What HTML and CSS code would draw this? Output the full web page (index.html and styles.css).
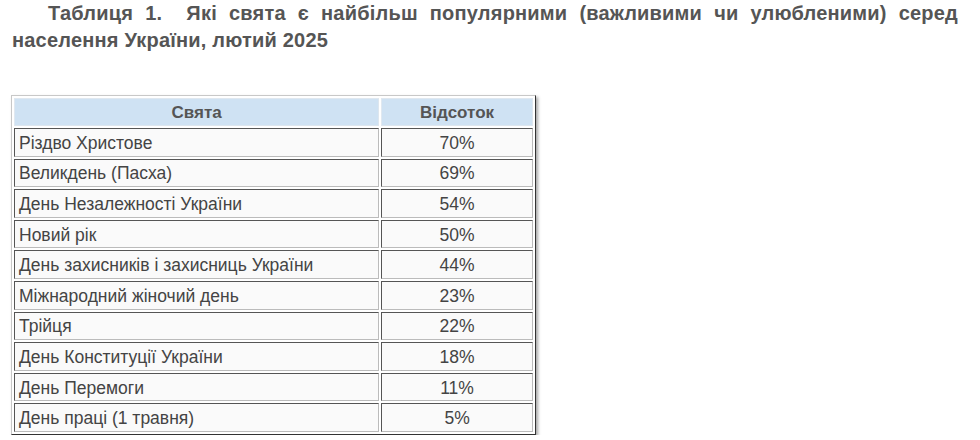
FILE: index.html
```html
<!DOCTYPE html>
<html lang="uk">
<head>
<meta charset="utf-8">
<link rel="stylesheet" href="styles.css">
</head>
<body>
<p class="title">Таблиця 1.&nbsp; Які свята є найбільш популярними (важливими чи улюбленими) серед населення України, лютий 2025</p>
<table class="data">
<thead>
<tr><th class="c1">Свята</th><th class="c2">Відсоток</th></tr>
</thead>
<tbody>
<tr><td>Різдво Христове</td><td class="num">70%</td></tr>
<tr><td>Великдень (Пасха)</td><td class="num">69%</td></tr>
<tr><td>День Незалежності України</td><td class="num">54%</td></tr>
<tr><td>Новий рік</td><td class="num">50%</td></tr>
<tr><td>День захисників і захисниць України</td><td class="num">44%</td></tr>
<tr><td>Міжнародний жіночий день</td><td class="num">23%</td></tr>
<tr><td>Трійця</td><td class="num">22%</td></tr>
<tr><td>День Конституції України</td><td class="num">18%</td></tr>
<tr><td>День Перемоги</td><td class="num">11%</td></tr>
<tr><td>День праці (1 травня)</td><td class="num">5%</td></tr>
</tbody>
</table>
</body>
</html>
```
FILE: styles.css
```css
html, body {
  margin: 0;
  padding: 0;
  background: #fff;
}
body {
  padding: 0 22px 0 12px;
  font-family: "Liberation Sans", Arial, sans-serif;
  color: #444;
}
.title {
  margin: 0 0 41px 0;
  font-size: 20px;
  font-weight: bold;
  line-height: 27px;
  letter-spacing: 0.2px;
  color: #555;
  text-align: justify;
  text-indent: 36px;
}
.data {
  width: 525px;
  border-collapse: separate;
  border-spacing: 2px;
  border: 1px solid;
  border-color: #c8c8c8 #333 #333 #c8c8c8;
  box-shadow: 2px 2px 3px rgba(0, 0, 0, 0.35);
  font-size: 17.5px;
  margin-left: -1px;
}
.data th, .data td {
  border: 1px solid;
  border-color: #555 #bbb #bbb #555;
  height: 28.6px;
  padding: 2px 4px 0;
  box-sizing: border-box;
  background: #fafafa;
  color: #444;
}
.data th {
  height: 28px;
  font-size: 17px;
  background: #cfe2f3;
  color: #555;
  font-weight: bold;
  text-align: center;
  border-color: #e0e8f0 #dde6ee #dde6ee #e0e8f0;
}
.data .c1 { width: 363px; }
.data .c2 { width: 151px; }
.data td.num {
  text-align: center;
}
```
